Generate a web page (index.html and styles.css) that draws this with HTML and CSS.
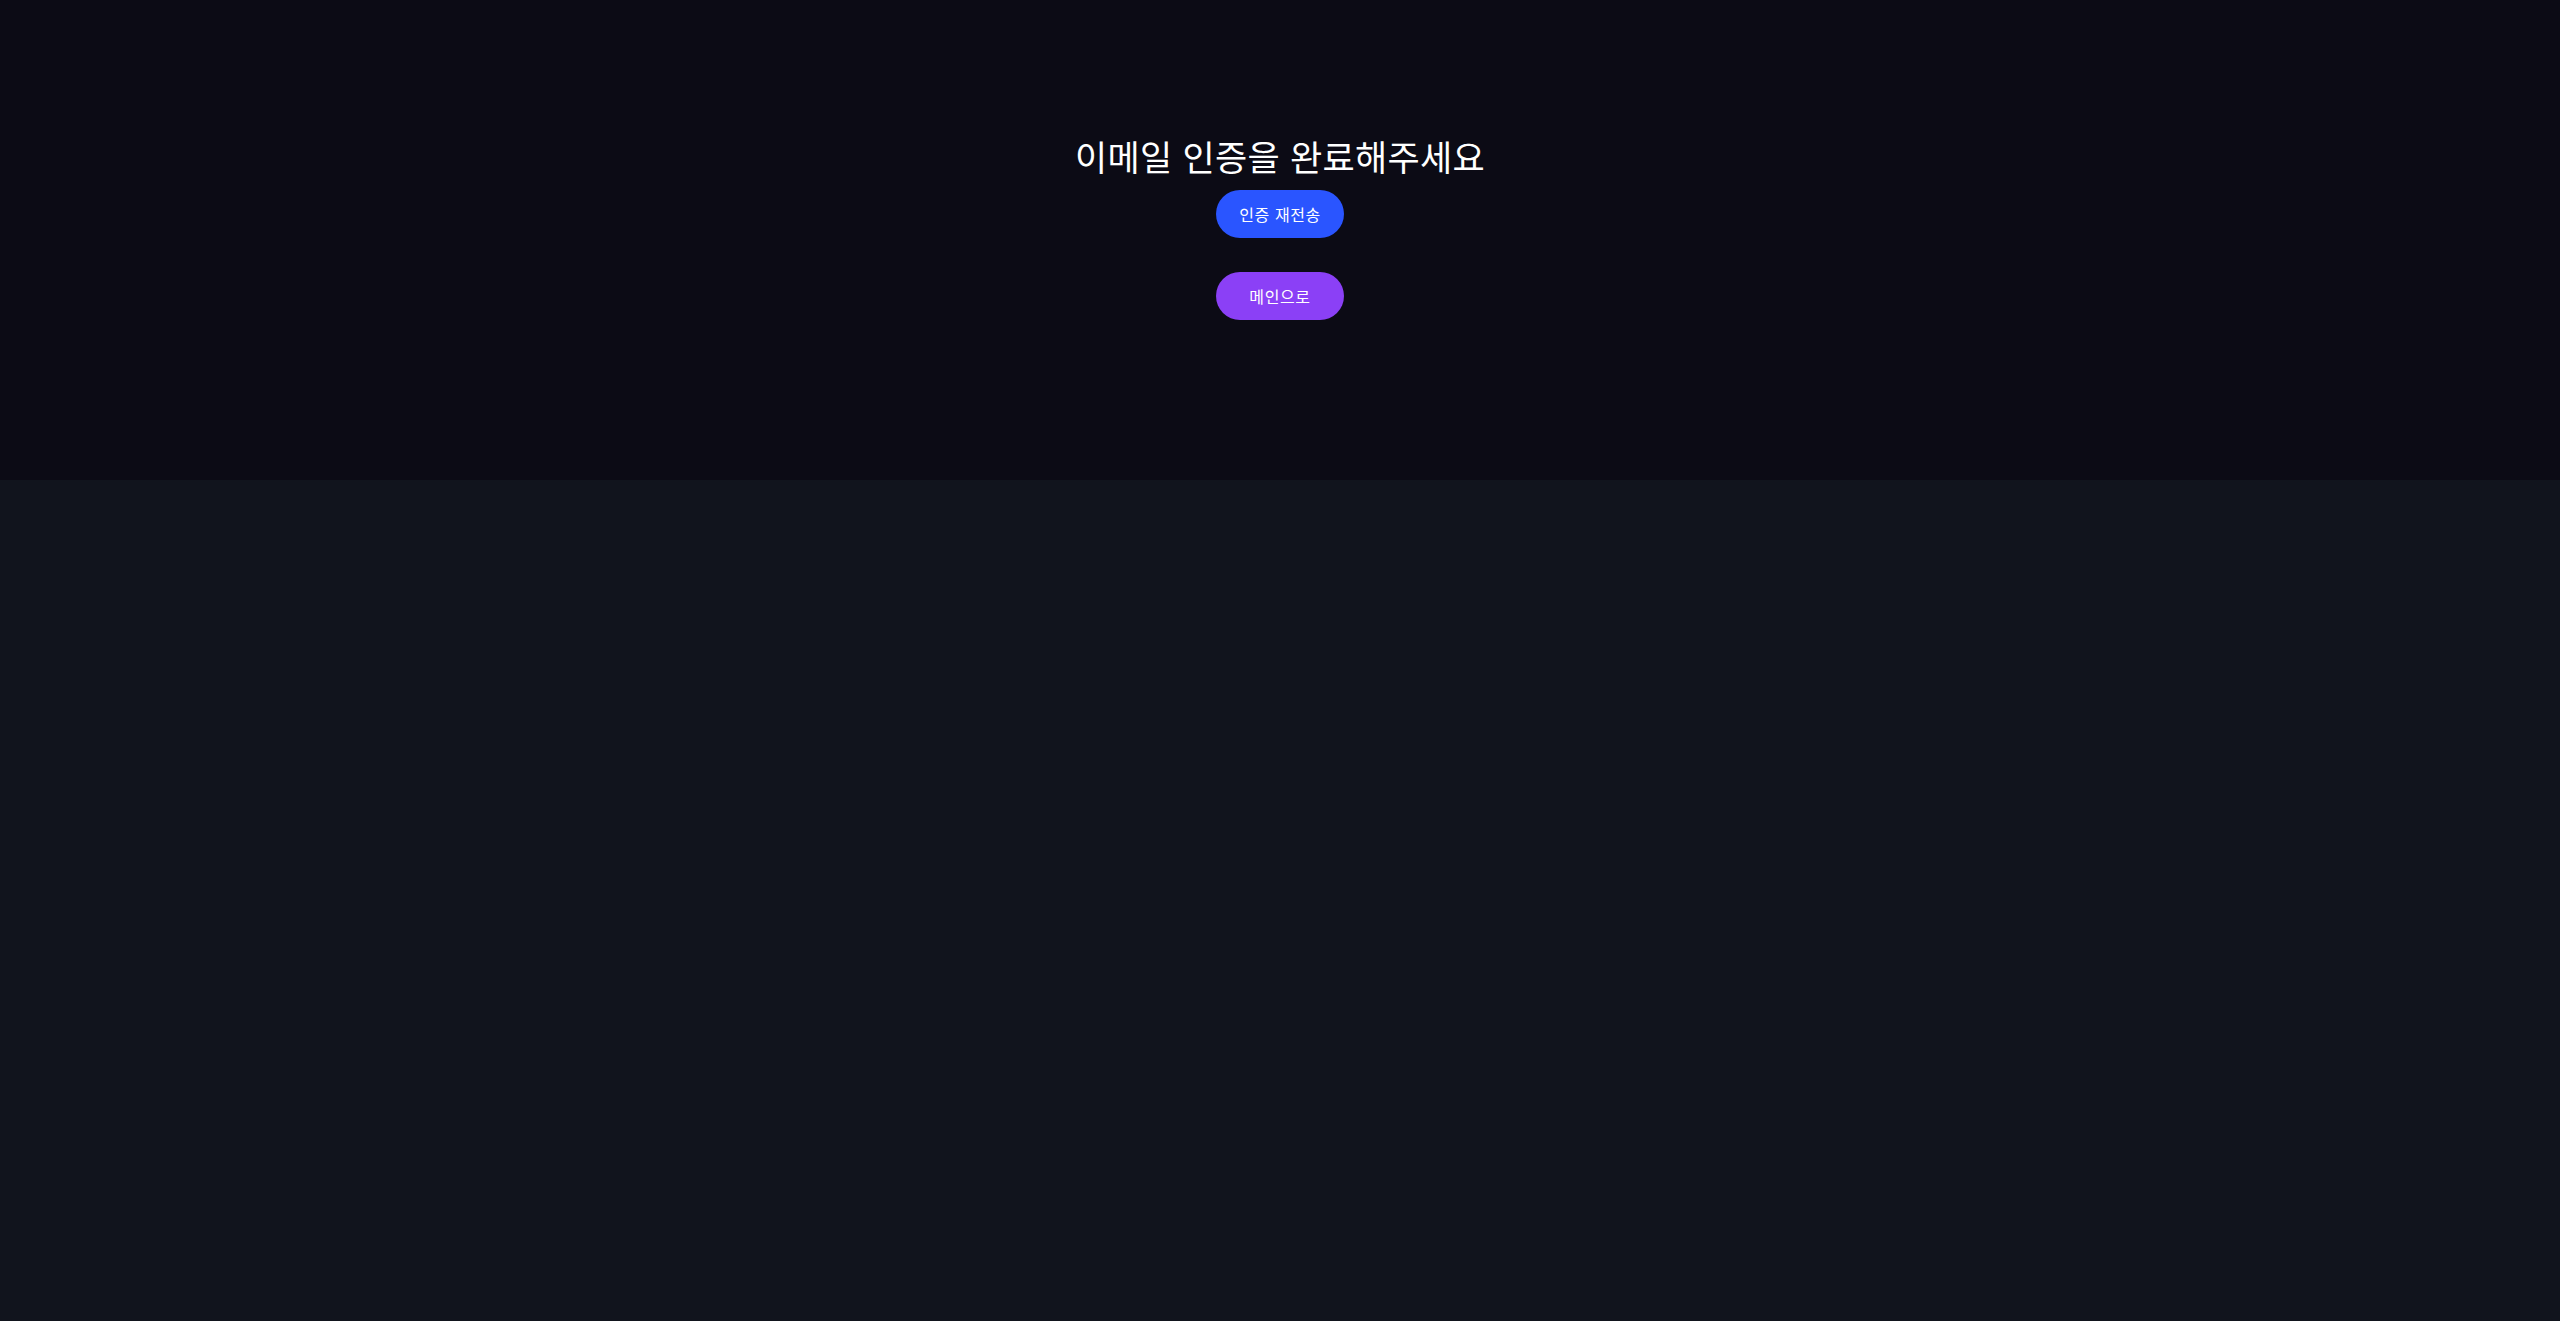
FILE: index.html
```html
<!DOCTYPE html>
<html lang="ko">
<head>
<meta charset="utf-8">
<title>이메일 인증</title>
<link rel="stylesheet" href="styles.css">
</head>
<body>
<main class="page">
  <section class="hero">
    <h1 class="title">이메일 인증을 완료해주세요</h1>
    <button class="btn btn-resend" type="button">인증 재전송</button>
    <button class="btn btn-main" type="button">메인으로</button>
  </section>
</main>
</body>
</html>
```
FILE: styles.css
```css
html, body {
  margin: 0;
  padding: 0;
  height: 100%;
}
body {
  background: #11141d;
  font-family: "Noto Sans CJK KR", "Noto Sans", sans-serif;
  color: #ffffff;
}
.hero {
  height: 480px;
  box-sizing: border-box;
  background: #0c0b15;
  display: flex;
  flex-direction: column;
  align-items: center;
  padding-top: 132px;
}
.title {
  margin: 0 0 10px;
  font-size: 35px;
  line-height: 48px;
  font-weight: 400;
  letter-spacing: 0.3px;
  color: #ffffff;
}
.btn {
  width: 128px;
  height: 48px;
  border: none;
  border-radius: 24px;
  color: #ffffff;
  font-family: "Noto Sans CJK KR", "Noto Sans", sans-serif;
  font-size: 16px;
  letter-spacing: 0.6px;
  cursor: pointer;
  padding: 0;
}
.btn-resend {
  background: #2a55ff;
  margin-bottom: 34px;
}
.btn-main {
  background: #8b40f6;
}
```
